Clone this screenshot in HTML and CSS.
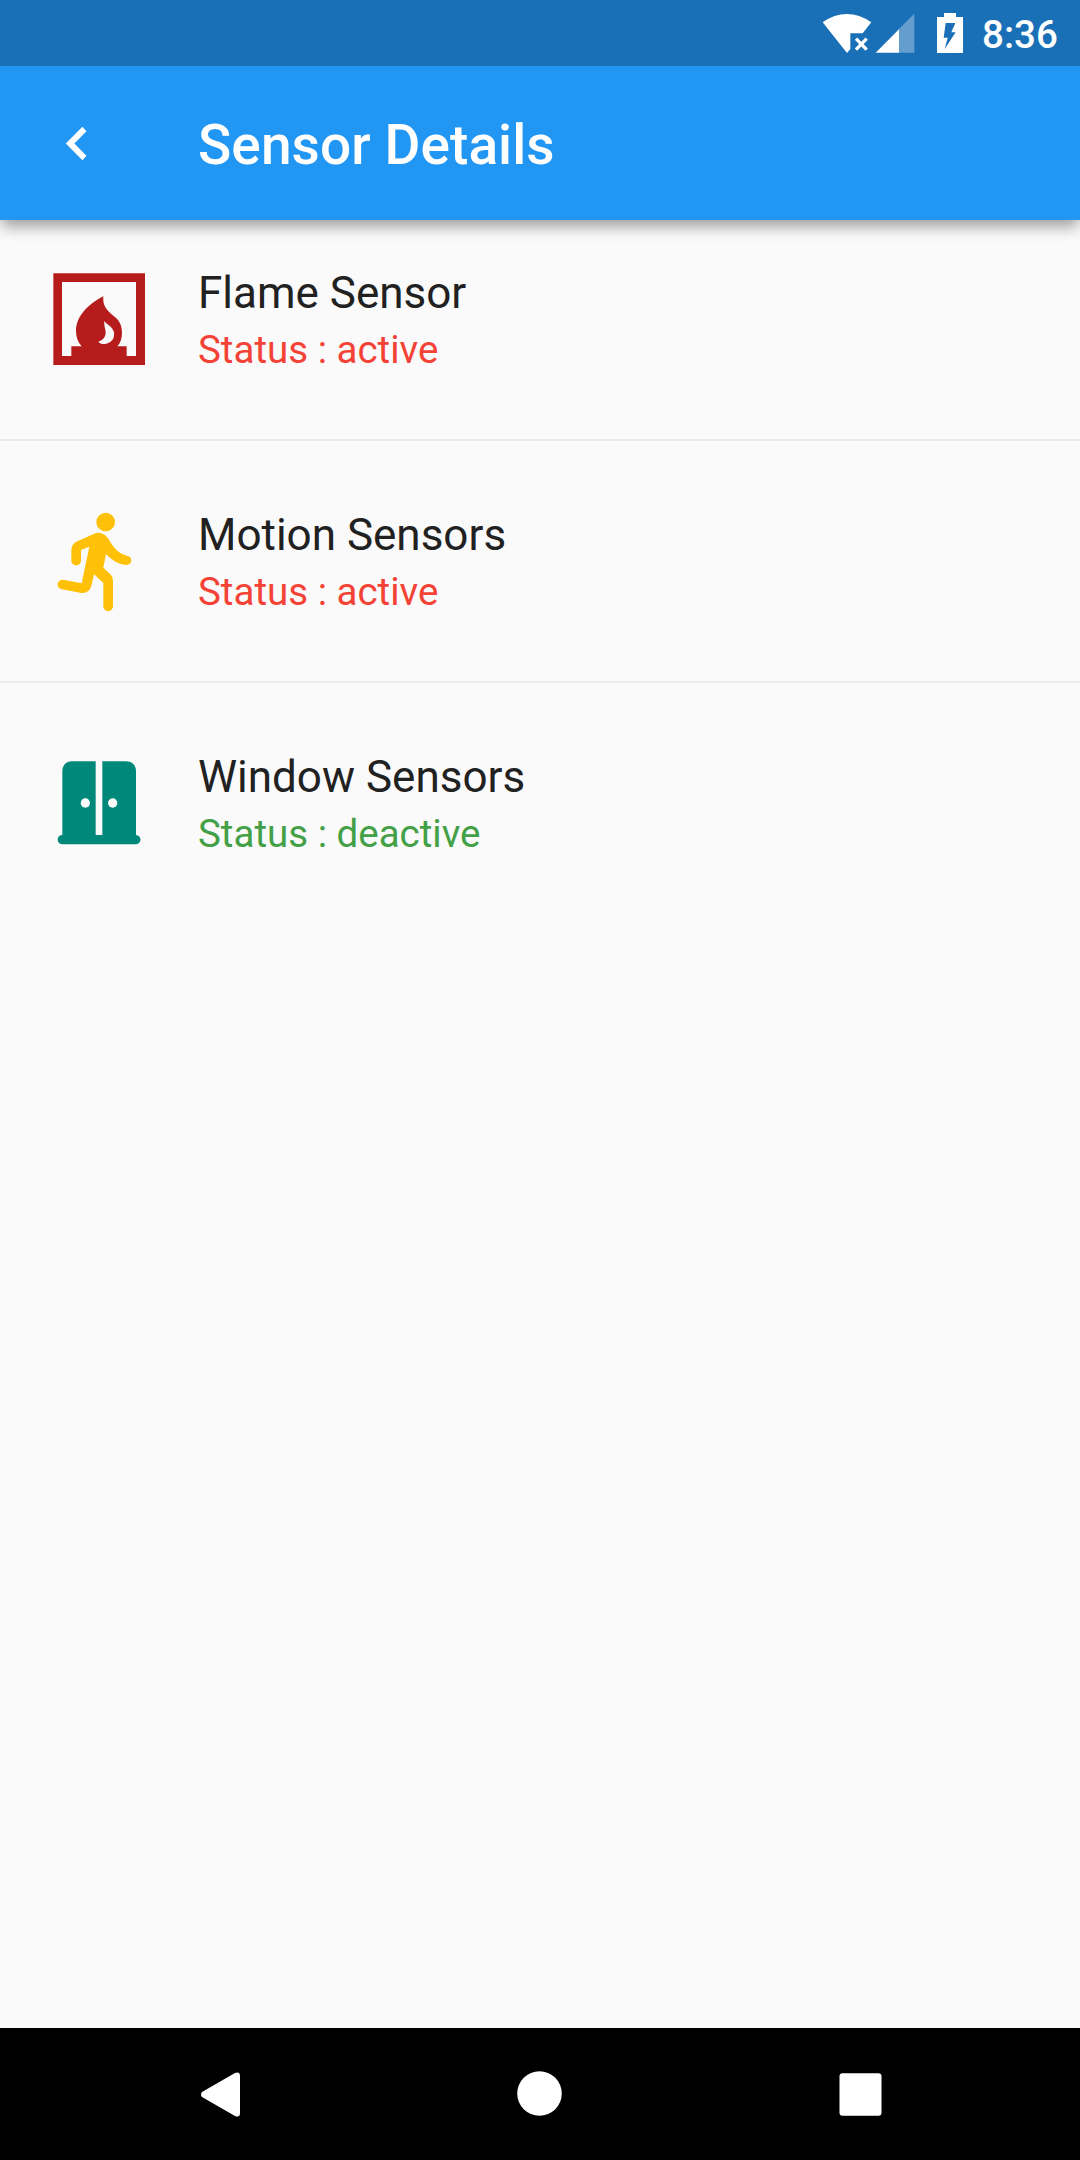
FILE: index.html
```html
<!DOCTYPE html>
<html lang="en">
<head>
<meta charset="utf-8">
<title>Sensor Details</title>
<link rel="stylesheet" href="styles.css">
</head>
<body>
<div class="screen">
  <div class="status-bar">
    <svg class="wifi" viewBox="36 0 150 198"><path fill="#fff" d="M38 67Q73 42 110.500 42T184 67L158 100H121V147L111 159Z"/><path stroke="#fff" stroke-width="10" d="M138 116L170 149M170 116L138 149"/></svg>
    <svg class="signal" viewBox="195 0 120 198"><path fill="#fff" fill-opacity=".32" d="M313 41V158H266V88Z"/><path fill="#fff" d="M267 88V158H197Z"/></svg>
    <svg class="battery" viewBox="378 0 84 198"><path fill="#fff" fill-rule="evenodd" d="M402 39H438V51H459V159H381V51H402ZM407 69L401 113H413L404 147L437 97H424L436 69Z"/></svg>
    <span class="clock">8:36</span>
  </div>
  <header class="app-bar">
    <svg class="back" viewBox="0 0 22 35"><path fill="#fff" d="M17.400 .800L21.500 5.200L9.400 17.500L21.500 29.800L17.400 34.200L.800 17.500Z"/></svg>
    <h1 class="heading">Sensor Details</h1>
  </header>
  <main class="sensors">
    <section class="sensor">
      <svg class="sensor-icon" viewBox="0 0 360 360"><path fill="#b71c1c" fill-rule="evenodd" d="M40 40H315V315H40ZM66 66V288H94V259H125C113 246 108 230 108 212C108 170 143 133 190 109C187 137 201 152 220 167C239 181 246 196 246 218C246 235 242 248 232 259H260V288H288V66ZM193 183C202 195 218 200 222 217C225 240 210 251 193 252C185 252 179 250 175 245C189 240 197 230 197 218C197 208 192 201 193 183Z"/></svg>
      <div class="info"><div class="name">Flame Sensor</div><div class="state on">Status : active</div></div>
    </section>
    <section class="sensor">
      <svg class="sensor-icon" viewBox="0 6 360 360"><circle cx="197" cy="66" r="28" fill="#ffc107"/><path fill="#ffc107" d="M176 98C190 99 199 107 206 118C223 148 238 162 261 167A14 14 0 0 1 259 195C234 192 214 180 198 162L190 203L211 223Q219 231 219 242V319A14.500 14.500 0 0 1 190 319V249L162 223L154 258Q147 281 124 279L66 268A14.500 14.500 0 0 1 69 239L125 250L148 140L123 150V182A14.500 14.500 0 0 1 94 182V150Q94 133 109 125L161 102Q168 98 176 98Z"/></svg>
      <div class="info"><div class="name">Motion Sensors</div><div class="state on">Status : active</div></div>
    </section>
    <section class="sensor">
      <svg class="sensor-icon" viewBox="0 12 360 360"><path fill="#00897b" d="M67 92Q69 66 94 64H167V285H187V64H260Q286 66 288 92V285A14 14 0 0 1 287 313H67A14 14 0 0 1 67 285Z"/><g fill="#fafafa"><circle cx="136" cy="189" r="14"/><circle cx="218" cy="189" r="14"/></g></svg>
      <div class="info"><div class="name">Window Sensors</div><div class="state off">Status : deactive</div></div>
    </section>
  </main>
  <nav class="nav-bar">
    <svg class="nav-icon" viewBox="-5 -1 50 50"><path fill="#fff" d="M2 22L35 3Q40 1 40 6V43Q40 48 35 46L2 27Q0 24.500 2 22Z"/></svg>
    <svg class="nav-icon" viewBox="0 -1 50 50"><circle cx="24.500" cy="23.500" r="22.300" fill="#fff"/></svg>
    <svg class="nav-icon" viewBox="0 -1 50 50"><rect x="4.500" y="3.300" width="42" height="42.400" rx="3" fill="#fff"/></svg>
  </nav>
</div>
</body>
</html>
```
FILE: styles.css
```css
body {
  margin: 0;
  font-family: Roboto, sans-serif;
}

.screen {
  display: flex;
  flex-direction: column;
  width: 1080px;
  height: 2160px;
  background: #fafafa;
  overflow: hidden;
}

.status-bar {
  position: relative;
  z-index: 1;
  display: flex;
  justify-content: flex-end;
  box-sizing: border-box;
  height: 66px;
  padding-right: 22px;
  background: #1a70b7;
  color: #fff;
}

.status-bar svg {
  height: 66px;
}

.wifi {
  width: 50px;
}

.signal {
  width: 40px;
  margin-left: 3px;
}

.battery {
  width: 28px;
  margin-left: 21px;
}

.clock {
  width: 76px;
  margin-left: 18px;
  font-size: 38.5px;
  font-weight: 500;
  line-height: 69px;
  white-space: nowrap;
}

.app-bar {
  display: flex;
  align-items: center;
  height: 154px;
  padding-left: 65px;
  background: #2196f3;
  box-shadow: 0 11px 14px -3px rgba(0, 0, 0, .2), 0 4px 14px rgba(0, 0, 0, .22);
}

.back {
  width: 22px;
  height: 35px;
}

.heading {
  margin: 4px 0 0 111px;
  color: #fff;
  font-size: 55px;
  font-weight: 500;
  line-height: 64px;
  letter-spacing: .07px;
}

.sensors {
  flex: 1;
}

.sensor {
  display: flex;
  box-sizing: border-box;
  height: 242px;
  padding: 62px 0 0 40px;
}

.sensor:first-child {
  height: 220px;
  padding-top: 40px;
}

.sensor + .sensor {
  box-shadow: inset 0 1px #ebebeb, 0 -1px #ebebeb;
}

.sensor-icon {
  width: 120px;
  height: 120px;
}

.info {
  margin-left: 38px;
}

.name {
  margin-top: 7px;
  color: #212121;
  font-size: 44px;
  line-height: 52px;
}

.state {
  margin-top: 8px;
  font-size: 38.5px;
  line-height: 46px;
}

.on {
  color: #f44336;
}

.off {
  color: #43a047;
}

.nav-bar {
  display: flex;
  justify-content: space-between;
  align-items: center;
  box-sizing: border-box;
  height: 132px;
  padding: 0 195px;
  background: #000;
}

.nav-icon {
  width: 50px;
  height: 50px;
}
```
